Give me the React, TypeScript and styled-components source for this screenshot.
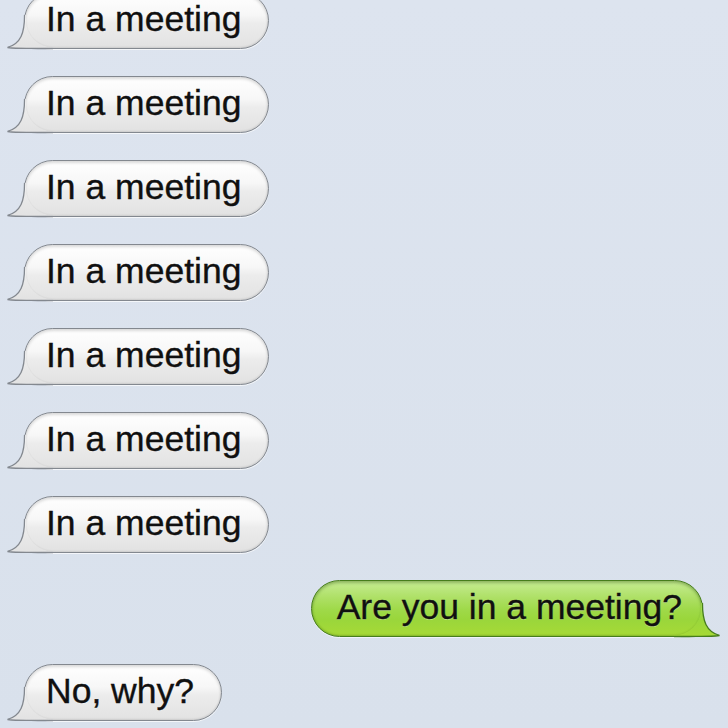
import React from "react";
import styled, { createGlobalStyle, css } from "styled-components";

const GlobalStyle = createGlobalStyle`
  html, body {
    margin: 0;
    padding: 0;
    background: #dbe3ee;
  }
  body {
    width: 728px;
    height: 728px;
    overflow: hidden;
    font-family: "Liberation Sans", Arial, Helvetica, sans-serif;
  }
`;

type Side = "in" | "out";

const Thread = styled.div`
  width: 728px;
  height: 728px;
  overflow: hidden;
  background: linear-gradient(180deg, #dde4ef 0%, #d9e1ec 100%);
`;

const List = styled.div`
  display: flex;
  flex-direction: column;
  gap: 27px;
  margin-top: -8px;
`;

const Row = styled.div<{ $side: Side }>`
  display: flex;
  justify-content: ${(p) => (p.$side === "in" ? "flex-start" : "flex-end")};
  padding: ${(p) => (p.$side === "in" ? "0 0 0 24px" : "0 25px 0 0")};
`;

const grayBody = css`
  border: 1px solid #83888f;
  background: linear-gradient(
    180deg,
    #ffffff 0%,
    #f7f7f7 40%,
    #ececec 55%,
    #e2e2e2 100%
  );
  box-shadow: inset 0 2px 3px rgba(0, 0, 0, 0.15),
    inset 0 -1px 2px rgba(0, 0, 0, 0.1), 0 1px 0 rgba(255, 255, 255, 0.7);
  padding: 0 27px 0 21px;
`;

const greenBody = css`
  border: 1px solid #467d1c;
  background: linear-gradient(
    180deg,
    #c6ec93 0%,
    #aee066 30%,
    #9fd949 52%,
    #9ad63b 70%,
    #a7da36 100%
  );
  box-shadow: inset 0 2px 3px rgba(40, 80, 10, 0.35),
    inset 0 -1px 2px rgba(40, 80, 10, 0.25), 0 1px 0 rgba(255, 255, 255, 0.6);
  padding: 0 20px 0 25px;
`;

const Bubble = styled.div<{ $side: Side }>`
  position: relative;
  height: 57px;
  box-sizing: border-box;
  border-radius: 28.5px;
  font-size: 35.5px;
  line-height: 53px;
  color: #101010;
  white-space: nowrap;
  -webkit-text-stroke: 0.35px #101010;
  ${(p) => (p.$side === "in" ? grayBody : greenBody)}
`;

const Text = styled.span`
  position: relative;
  z-index: 1;
  text-shadow: 0 1px 0 rgba(255, 255, 255, 0.35);
`;

const TailSvg = styled.svg<{ $side: Side }>`
  position: absolute;
  bottom: -1px;
  width: 50px;
  height: 42px;
  overflow: visible;
  ${(p) =>
    p.$side === "in"
      ? css`
          left: -19px;
        `
      : css`
          right: -19px;
          transform: scaleX(-1);
        `}
`;

const fillPath =
  "M18.55,8 C18.5,26 15,36.5 1.5,40.5 C14,42 24,41 32,41.5 L47,41.5 L47,40 A26.5,26.5 0 0 1 20,13.5 L20,8 Z";
const strokePath =
  "M18.55,8 C18.5,26 15,36.5 1.5,40.5 C14,42 24,41 32,41.5 L47,41.5";

function Tail({ side }: { side: Side }) {
  const id = side === "in" ? "tailGray" : "tailGreen";
  const stops =
    side === "in"
      ? [
          ["0", "#ffffff"],
          ["0.4", "#f7f7f7"],
          ["0.55", "#ececec"],
          ["1", "#e2e2e2"],
        ]
      : [
          ["0", "#c6ec93"],
          ["0.3", "#aee066"],
          ["0.52", "#9fd949"],
          ["0.7", "#9ad63b"],
          ["1", "#a7da36"],
        ];
  return (
    <TailSvg $side={side} viewBox="0 0 50 42" aria-hidden="true">
      <defs>
        <linearGradient
          id={id}
          gradientUnits="userSpaceOnUse"
          x1="0"
          y1="-15"
          x2="0"
          y2="42"
        >
          {stops.map(([o, c]) => (
            <stop key={o} offset={o} stopColor={c} />
          ))}
        </linearGradient>
      </defs>
      <path d={fillPath} fill={`url(#${id})`} />
      <path
        d={strokePath}
        fill="none"
        stroke={side === "in" ? "#83888f" : "#467d1c"}
        strokeWidth="1.3"
      />
    </TailSvg>
  );
}

const messages: { side: Side; text: string }[] = [
  { side: "in", text: "In a meeting" },
  { side: "in", text: "In a meeting" },
  { side: "in", text: "In a meeting" },
  { side: "in", text: "In a meeting" },
  { side: "in", text: "In a meeting" },
  { side: "in", text: "In a meeting" },
  { side: "in", text: "In a meeting" },
  { side: "out", text: "Are you in a meeting?" },
  { side: "in", text: "No, why?" },
];

export default function App() {
  return (
    <>
      <GlobalStyle />
      <Thread>
        <List>
          {messages.map((m, i) => (
            <Row key={i} $side={m.side}>
              <Bubble $side={m.side}>
                <Tail side={m.side} />
                <Text>{m.text}</Text>
              </Bubble>
            </Row>
          ))}
        </List>
      </Thread>
    </>
  );
}
